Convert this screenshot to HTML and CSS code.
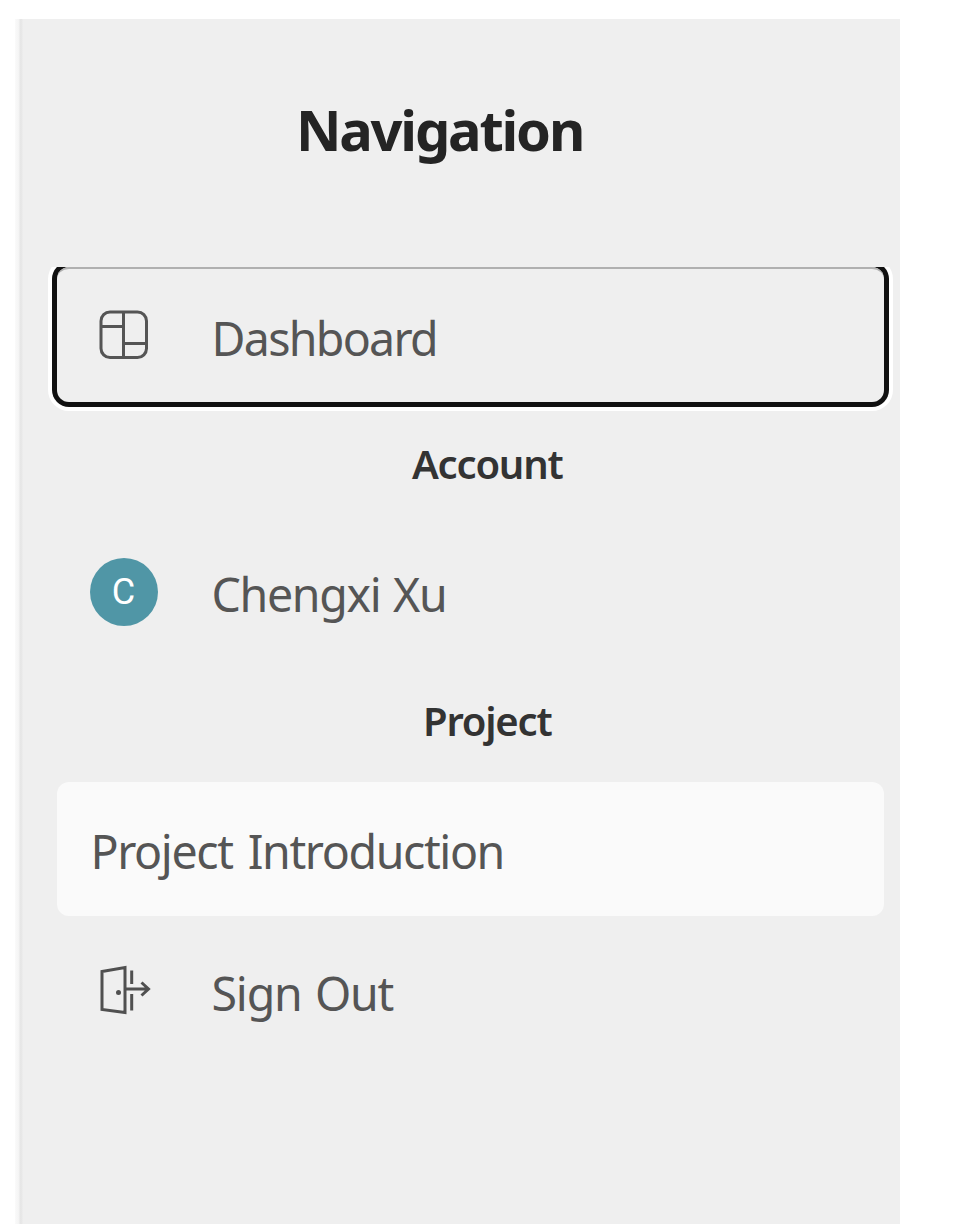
FILE: index.html
```html
<!DOCTYPE html>
<html lang="en">
<head>
<meta charset="utf-8">
<title>Navigation</title>
<link rel="stylesheet" href="styles.css">
</head>
<body>
<nav class="sidebar">
  <h1 class="title"><span class="title-text">Navigation</span></h1>
  <div class="list">
    <a class="item item-focused">
      <span class="icon"><svg class="glyph" viewBox="0 0 68 68" fill="none" stroke="#555" stroke-width="3"><rect x="11" y="11" width="45.500" height="45.500" rx="9"/><path d="M33.500 11v45.500M11 25.500h22.500M33.500 42.500h23"/></svg></span>
      <span class="label label-dashboard">Dashboard</span>
    </a>
    <h2 class="section"><span class="section-text">Account</span></h2>
    <a class="item">
      <span class="icon avatar"><span class="initial">C</span></span>
      <span class="label label-name">Chengxi Xu</span>
    </a>
    <h2 class="section"><span class="section-text">Project</span></h2>
    <a class="item item-selected"><span class="label label-intro">Project Introduction</span></a>
    <a class="item item-signout">
      <span class="icon"><svg class="glyph" viewBox="0 0 68 68" fill="none" stroke="#505050" stroke-width="3"><path d="M12 14.500 35 10.500V55.500L12 52.500ZM35.500 32H58M51.500 25.500 58.500 32 51.500 38.500M41.700 13.500V27M41.700 37V53.500"/><circle cx="28.500" cy="35.500" r="2.500" fill="#505050" stroke="none"/></svg></span>
      <span class="label label-signout">Sign Out</span>
    </a>
  </div>
</nav>
</body>
</html>
```
FILE: styles.css
```css
* { box-sizing: border-box; }

body {
  margin: 0;
  padding: 19px 72px 0 15px;
  height: 1224px;
  overflow: hidden;
  background: #fff;
  font-family: "Noto Sans", "Open Sans", sans-serif;
}

.sidebar {
  height: 1205px;
  background: linear-gradient(to right, #fafafa 0, #f4f4f4 4px, #e6e6e6 5px, #e8e8e8 7px, #efefef 8px);
}

.title {
  display: flex;
  justify-content: center;
  height: 248px;
  margin: 0;
  padding: 72px 36px 0 0;
  font-size: 56px;
  line-height: 76px;
  font-weight: 700;
  color: #242424;
}

.title-text { letter-spacing: -2.2px; }

.list {
  padding: 0 16px 0 41.500px;
  overflow: hidden;
}

.item {
  display: flex;
  align-items: center;
  height: 134px;
  padding: 0 34px 0 33px;
  border-radius: 12px;
  color: #555;
  font-size: 46.500px;
  line-height: 64px;
}

.item-focused {
  height: 135px;
  border-top: 2px solid #b0b0b0;
  border-radius: 12px;
  box-shadow: 0 0 0 5px #111, 0 0 0 9px #fff;
}

.item-selected {
  padding-left: 34px;
  background: #fafafa;
}

.item-signout { margin-top: 8px; }

.icon {
  flex: none;
  width: 68px;
  height: 68px;
  margin-right: 54px;
}

.glyph {
  display: block;
  width: 68px;
  height: 68px;
}

.item-focused .glyph { margin-top: -1px; }

.avatar {
  display: flex;
  align-items: center;
  justify-content: center;
  border-radius: 50%;
  background: #5096a6;
  color: #fff;
}

.initial {
  font: 36px/40px Roboto, sans-serif;
}

.label {
  padding-top: 4px;
  white-space: nowrap;
}

.label-dashboard { letter-spacing: -1.700px; }
.label-name { letter-spacing: -1.350px; word-spacing: 2px; }
.label-intro { letter-spacing: -1.400px; word-spacing: 4.500px; }
.label-signout { letter-spacing: -1.200px; word-spacing: 2.500px; }

.section {
  display: flex;
  justify-content: center;
  height: 123px;
  margin: 0;
  padding: 35px 0 0 34px;
  font-size: 40px;
  line-height: 54px;
  font-weight: 600;
  color: #333;
}

.section-text { letter-spacing: -1.200px; }
```
